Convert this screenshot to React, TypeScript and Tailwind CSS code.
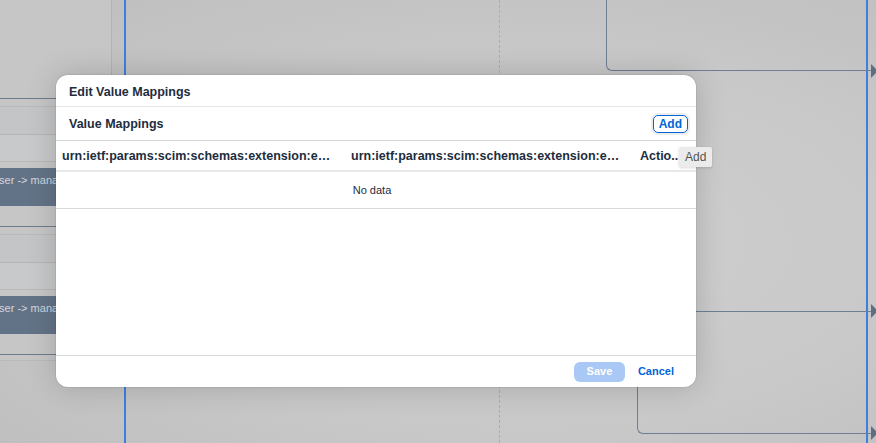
import { ReactNode } from 'react';

const font = { fontFamily: '"Liberation Sans", Arial, sans-serif' };

function SideGroup() {
  return (
    <div className="flex flex-col shrink-0">
      <div className="h-[1px] bg-[#6d7c8c]" />
      <div className="h-[7px]" />
      <div className="h-[1px] bg-[#b9b9b9]" />
      <div className="h-[28px] bg-[#c4c5c6] border-b border-[#b5b5b5]" />
      <div className="h-[27px] bg-[#c8c9ca] border-b border-[#b9b9b9]" />
      <div className="h-[6px]" />
      <div className="h-[38px] bg-[#637387] pt-[4px] overflow-hidden whitespace-nowrap text-[11px] leading-[16px] text-[#d3d8de]">
        <span className="ml-[-7px]">user -&gt; manager</span>
      </div>
      <div className="h-[20px]" />
    </div>
  );
}

function Column({ children }: { children: ReactNode }) {
  return <div className="pl-[6px] pr-[14px] truncate">{children}</div>;
}

export default function App() {
  return (
    <div
      className="relative w-[876px] h-[443px] overflow-hidden bg-[#c9c9c9] text-[#1d2d3e]"
      style={font}
    >
      {/* canvas backdrop */}
      <div className="absolute inset-0 bg-[radial-gradient(ellipse_at_60%_55%,#d0d0d0_0%,#c8c8c8_55%,#bdbdbd_100%)]" />

      {/* left lane panel */}
      <div className="absolute left-0 top-0 w-[112px] h-[360px] border-r border-[#b4b4b4] bg-[#c6c6c6] flex flex-col">
        <div className="h-[98px] shrink-0" />
        <SideGroup />
        <SideGroup />
        <div className="h-[1px] bg-[#6d7c8c] shrink-0" />
        <div className="h-[5px] shrink-0" />
        <div className="h-[1px] bg-[#b9b9b9] shrink-0" />
      </div>

      {/* diagram lines */}
      <div className="absolute left-[124px] top-0 h-full w-[1.5px] bg-[#3d7fe0]" />
      <div className="absolute left-[866px] top-0 h-full w-[1.5px] bg-[#3d7fe0]" />
      <div className="absolute left-[499px] top-0 h-full border-l border-dashed border-[#adadad]" />
      <div className="absolute left-[606px] top-[-10px] w-[280px] h-[81px] border-l border-b border-[#6e7f92] rounded-bl-[6px]" />
      <div className="absolute left-[680px] top-[311px] w-[200px] border-t border-[#6e7f92]" />
      <div className="absolute left-[637px] top-[370px] w-[250px] h-[64px] border-l border-b border-[#6e7f92] rounded-bl-[6px]" />
      {[64, 304, 426].map((t) => (
        <div
          key={t}
          className="absolute left-[871px] w-0 h-0 border-y-[7px] border-y-transparent border-l-[7px] border-l-[#5f6f82]"
          style={{ top: t }}
        />
      ))}

      {/* dialog */}
      <div className="absolute left-[56px] top-[75px] w-[640px] h-[312px] rounded-[12px] bg-white flex flex-col overflow-hidden shadow-[0_0_30px_rgba(0,0,0,0.18),0_0_0_1px_rgba(0,0,0,0.06)]">
        <div className="h-[32px] px-[13px] pt-[3px] flex items-center border-b border-[#e5e5e5] text-[12.5px] font-bold">
          Edit Value Mappings
        </div>
        <div className="h-[34px] pl-[13px] pr-[8px] pt-[1px] flex items-center justify-between border-b border-[#d5d5d5]">
          <span className="text-[12.5px] font-bold">Value Mappings</span>
          <button className="h-[18px] px-[5px] rounded-[5px] border border-[#0064d9] text-[12px] font-bold text-[#0064d9] leading-none shadow-[0_0_0_2px_#ededed]">
            Add
          </button>
        </div>
        <div className="h-[31px] pt-[1px] grid grid-cols-[289px_289px_1fr] items-center border-b-2 border-[#e8e8e8] text-[12.5px] font-bold">
          <Column>urn:ietf:params:scim:schemas:extension:enterprise:2.0:User:manager</Column>
          <Column>urn:ietf:params:scim:schemas:extension:enterprise:2.0:User:manager</Column>
          <div className="pl-[6px] whitespace-nowrap overflow-hidden">Actio..</div>
        </div>
        <div className="h-[37px] pr-[8px] flex items-center justify-center border-b border-[#d9d9d9] text-[11px]">
          No data
        </div>
        <div className="flex-1 border-b border-[#d9d9d9]" />
        <div className="h-[31px] flex items-center justify-end pr-[14px] gap-[6px]">
          <button className="h-[20px] w-[51px] rounded-[6px] bg-[#a9c8f6] text-white text-[11px] font-bold">
            Save
          </button>
          <button className="h-[20px] pl-[7px] pr-[8px] text-[#0064d9] text-[11px] font-bold">
            Cancel
          </button>
        </div>
      </div>

      {/* tooltip */}
      <div className="absolute left-[679px] top-[147px] h-[20px] px-[6px] flex items-center rounded-[2px] bg-[#ebebeb] text-[12px] text-[#555] shadow-[0_1px_3px_rgba(0,0,0,0.15)]">
        Add
      </div>
    </div>
  );
}
